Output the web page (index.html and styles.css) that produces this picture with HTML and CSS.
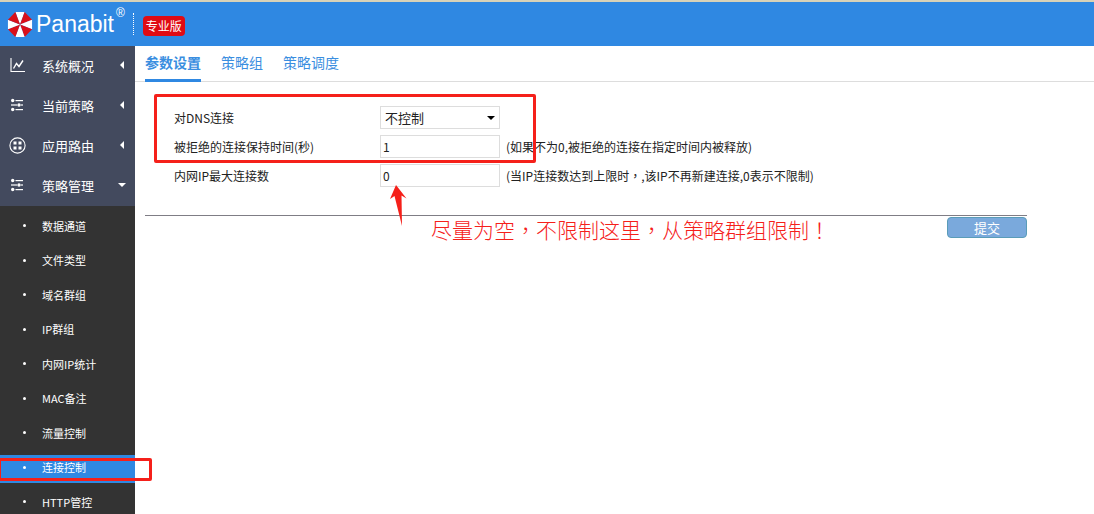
FILE: index.html
```html
<!DOCTYPE html>
<html lang="zh">
<head>
<meta charset="utf-8">
<title>Panabit</title>
<link rel="stylesheet" href="styles.css">
</head>
<body>
<header class="topbar">
  <svg class="logo" width="26" height="27" viewBox="0 0 28 28" preserveAspectRatio="none">
    <polygon points="14,14 9,1 19,1" fill="#fff"/>
    <polygon points="14,14 19,1 27,9" fill="#d9101a"/>
    <polygon points="14,14 27,9 27,19" fill="#fff"/>
    <polygon points="14,14 27,19 19,27" fill="#d9101a"/>
    <polygon points="14,14 19,27 9,27" fill="#fff"/>
    <polygon points="14,14 9,27 1,19" fill="#d9101a"/>
    <polygon points="14,14 1,19 1,9" fill="#fff"/>
    <polygon points="14,14 1,9 9,1" fill="#d9101a"/>
  </svg>
  <span class="brand">Panabit</span>
  <span class="reg">®</span>
  <span class="divider"></span>
  <span class="badge">专业版</span>
</header>
<div class="body-row">
  <nav class="sidebar">
    <div class="menu-item">
      <svg class="mi" width="16" height="16" viewBox="0 0 16 16" fill="none" stroke="#fff" stroke-width="1.1"><path d="M1 1v13.5h14"/><path d="M3.5 11.5l3-5 2.5 3 4-6" stroke-width="1.4"/></svg>
      <span class="menu-label">系统概况</span><span class="caret-left"></span>
    </div>
    <div class="menu-item">
      <svg class="mi mi-sliders" width="12" height="14" viewBox="0 0 12 14" fill="#fff"><circle cx="1.7" cy="2.5" r="1.7"/><rect x="4.5" y="2" width="7.5" height="1.2"/><circle cx="8" cy="7" r="1.7"/><rect x="0" y="6.4" width="6" height="1.2"/><rect x="10" y="6.4" width="2" height="1.2"/><circle cx="1.7" cy="11.5" r="1.7"/><rect x="4.5" y="11" width="7.5" height="1.2"/></svg>
      <span class="menu-label">当前策略</span><span class="caret-left"></span>
    </div>
    <div class="menu-item">
      <svg class="mi mi-wide" width="17" height="17" viewBox="0 0 17 17" fill="none" stroke="#fff" stroke-width="1.1"><circle cx="8.5" cy="8.5" r="7.6"/><g fill="#fff" stroke="none"><rect x="4.5" y="4.5" width="3" height="3"/><rect x="9.5" y="4.5" width="3" height="3"/><rect x="4.5" y="9.5" width="3" height="3"/><rect x="9.5" y="9.5" width="3" height="3"/></g></svg>
      <span class="menu-label">应用路由</span><span class="caret-left"></span>
    </div>
    <div class="menu-item">
      <svg class="mi mi-sliders" width="12" height="14" viewBox="0 0 12 14" fill="#fff"><circle cx="1.7" cy="2.5" r="1.7"/><rect x="4.5" y="2" width="7.5" height="1.2"/><circle cx="8" cy="7" r="1.7"/><rect x="0" y="6.4" width="6" height="1.2"/><rect x="10" y="6.4" width="2" height="1.2"/><circle cx="1.7" cy="11.5" r="1.7"/><rect x="4.5" y="11" width="7.5" height="1.2"/></svg>
      <span class="menu-label">策略管理</span><span class="caret-down"></span>
    </div>
    <ul class="submenu">
      <li class="sub-item"><span class="dot"></span>数据通道</li>
      <li class="sub-item"><span class="dot"></span>文件类型</li>
      <li class="sub-item"><span class="dot"></span>域名群组</li>
      <li class="sub-item"><span class="dot"></span>IP群组</li>
      <li class="sub-item"><span class="dot"></span>内网IP统计</li>
      <li class="sub-item"><span class="dot"></span>MAC备注</li>
      <li class="sub-item"><span class="dot"></span>流量控制</li>
      <li class="sub-item active"><span class="dot"></span>连接控制</li>
      <li class="sub-item"><span class="dot"></span>HTTP管控</li>
    </ul>
  </nav>
  <main class="content">
    <div class="tabs">
      <span class="tab current">参数设置</span>
      <span class="tab">策略组</span>
      <span class="tab">策略调度</span>
    </div>
    <form class="panel">
      <div class="form-row">
        <label class="field-label">对DNS连接</label>
        <div class="fake-select"><span>不控制</span><span class="select-arrow"></span></div>
      </div>
      <div class="form-row">
        <label class="field-label">被拒绝的连接保持时间(秒)</label>
        <div class="field-input">1</div>
        <span class="hint">(如果不为0,被拒绝的连接在指定时间内被释放)</span>
      </div>
      <div class="form-row">
        <label class="field-label">内网IP最大连接数</label>
        <div class="field-input">0</div>
        <span class="hint">(当IP连接数达到上限时<span class="mid-punct" lang="zh-Hant">，</span>,该IP不再新建连接,0表示不限制)</span>
      </div>
      <div class="actions"><span class="submit">提交</span></div>
    </form>
  </main>
</div>
<div class="mark mark-form"></div>
<div class="mark mark-nav"></div>
<svg class="mark-arrow" width="20" height="44" viewBox="0 0 20 44"><path d="M8 2L18.5 15.5L13.5 12.5L14 43L6.5 13L2 16Z" fill="#f5201a"/></svg>
<div class="mark-text" lang="zh-Hant">尽量为空，不限制这里，从策略群组限制！</div>
</body>
</html>
```
FILE: styles.css
```css
* { box-sizing: border-box; }
html, body { margin: 0; padding: 0; }
body {
  width: 1094px;
  height: 514px;
  overflow: hidden;
  position: relative;
  background: #fff;
  font-family: "Noto Sans CJK SC", "Liberation Sans", sans-serif;
  font-size: 12px;
  color: #222;
}
.topbar {
  height: 46px;
  background: #2f88e2;
  border-top: 2px solid #d8d2b8;
  display: flex;
  align-items: center;
  padding-left: 7px;
  position: relative;
}
.logo { flex: none; }
.brand {
  font-family: "Liberation Sans", sans-serif;
  font-size: 23px;
  color: #fff;
  margin-left: 3px;
  line-height: 28px;
}
.reg {
  color: #fff;
  font-family: "Liberation Sans", sans-serif;
  font-size: 12px;
  align-self: flex-start;
  margin: 4px 0 0 2px;
}
.divider {
  height: 22px;
  border-left: 1px dotted #fff;
  margin-left: 8px;
}
.badge {
  margin-left: 9px;
  background: #e00b14;
  color: #fff;
  border-radius: 4px;
  font-size: 12px;
  line-height: 20px;
  padding: 0 3px;
  height: 20px;
  margin-top: 3px;
}
.body-row { display: flex; height: 468px; }
.sidebar { width: 135px; flex: none; background: #333; overflow: hidden; }
.menu-item {
  height: 40px;
  background: #434a5e;
  display: flex;
  align-items: center;
  position: relative;
  color: #fff;
  font-size: 13px;
  padding: 0 0 2px 10px;
}
.mi { flex: none; margin-right: 16px; }
.mi-sliders { margin-left: 1px; margin-right: 19px; }
.mi-wide { margin-left: -1px; margin-right: 16px; }
.menu-label { flex: 1; }
.caret-left {
  width: 0; height: 0;
  border: 4px solid transparent;
  border-left: 0;
  border-right: 4px solid #fff;
  margin-right: 11px;
}
.caret-down {
  width: 0; height: 0;
  border: 4px solid transparent;
  border-bottom: 0;
  border-top: 4px solid #fff;
  margin-right: 9px;
}
.submenu { list-style: none; margin: 0; padding: 3px 0 0; }
.sub-item {
  height: 34.5px;
  display: flex;
  align-items: center;
  color: #fff;
  font-size: 11px;
  padding: 0 0 1px 23px;
  background: #333;
}
.sub-item.active {
  background: linear-gradient(#333 0 4px, #2f88e2 4px 32px, #333 32px);
}
.dot {
  width: 3px; height: 3px;
  background: #fff;
  border-radius: 50%;
  margin-right: 16px;
}
.content { flex: 1; min-width: 0; }
.tabs {
  height: 36px;
  border-bottom: 1px solid #ddd;
  display: flex;
  gap: 20px;
  padding-left: 10px;
}
.tab {
  color: #3a8ee0;
  font-size: 14px;
  line-height: 33px;
  height: 36px;
  padding: 0;
}
.tab.current { font-weight: 700; border-bottom: 3px solid #2f88e2; }
.panel { width: 892px; padding: 21px 0 0 10px; margin-top: 0; }
.form-row {
  height: 29px;
  display: flex;
  align-items: center;
  padding-left: 29px;
}
.field-label { width: 206px; flex: none; }
.fake-select, .field-input {
  width: 120px;
  height: 23px;
  border: 1px solid #ddd;
  background: #fff;
  display: flex;
  align-items: center;
  padding-left: 2px;
  flex: none;
  font-size: 12px;
}
.fake-select { justify-content: space-between; padding: 0 4px; font-size: 13px; }
.select-arrow {
  width: 0; height: 0;
  border: 4px solid transparent;
  border-bottom: 0;
  border-top: 4px solid #000;
}
.hint { margin-left: 6px; font-size: 12px; white-space: nowrap; }
.mid-punct { font-family: "Noto Sans CJK TC", sans-serif; }
.actions {
  margin-top: 25px;
  margin-left: 0;
  border-top: 1px solid #7f7d85;
  display: flex;
  justify-content: flex-end;
  padding-top: 1px;
  width: 882px;
}
.submit {
  width: 80px;
  height: 21px;
  background: #7aa9dc;
  border: 1px solid #5a9cb8;
  border-radius: 4px;
  color: #fff;
  font-size: 13px;
  text-align: center;
  line-height: 19px;
}
.mark { position: absolute; border: 3px solid #f5201a; border-radius: 2px; }
.mark-form { left: 154px; top: 94px; width: 382px; height: 69px; }
.mark-nav { left: -2px; top: 458px; width: 154px; height: 23px; }
.mark-arrow { position: absolute; left: 388px; top: 183px; }
.mark-text {
  position: absolute;
  left: 431px;
  top: 215px;
  color: #f5201a;
  font-family: "Noto Sans CJK TC", sans-serif;
  font-size: 21px;
  font-weight: 300;
  line-height: 28px;
  white-space: nowrap;
  text-spacing-trim: space-all;
}
```
